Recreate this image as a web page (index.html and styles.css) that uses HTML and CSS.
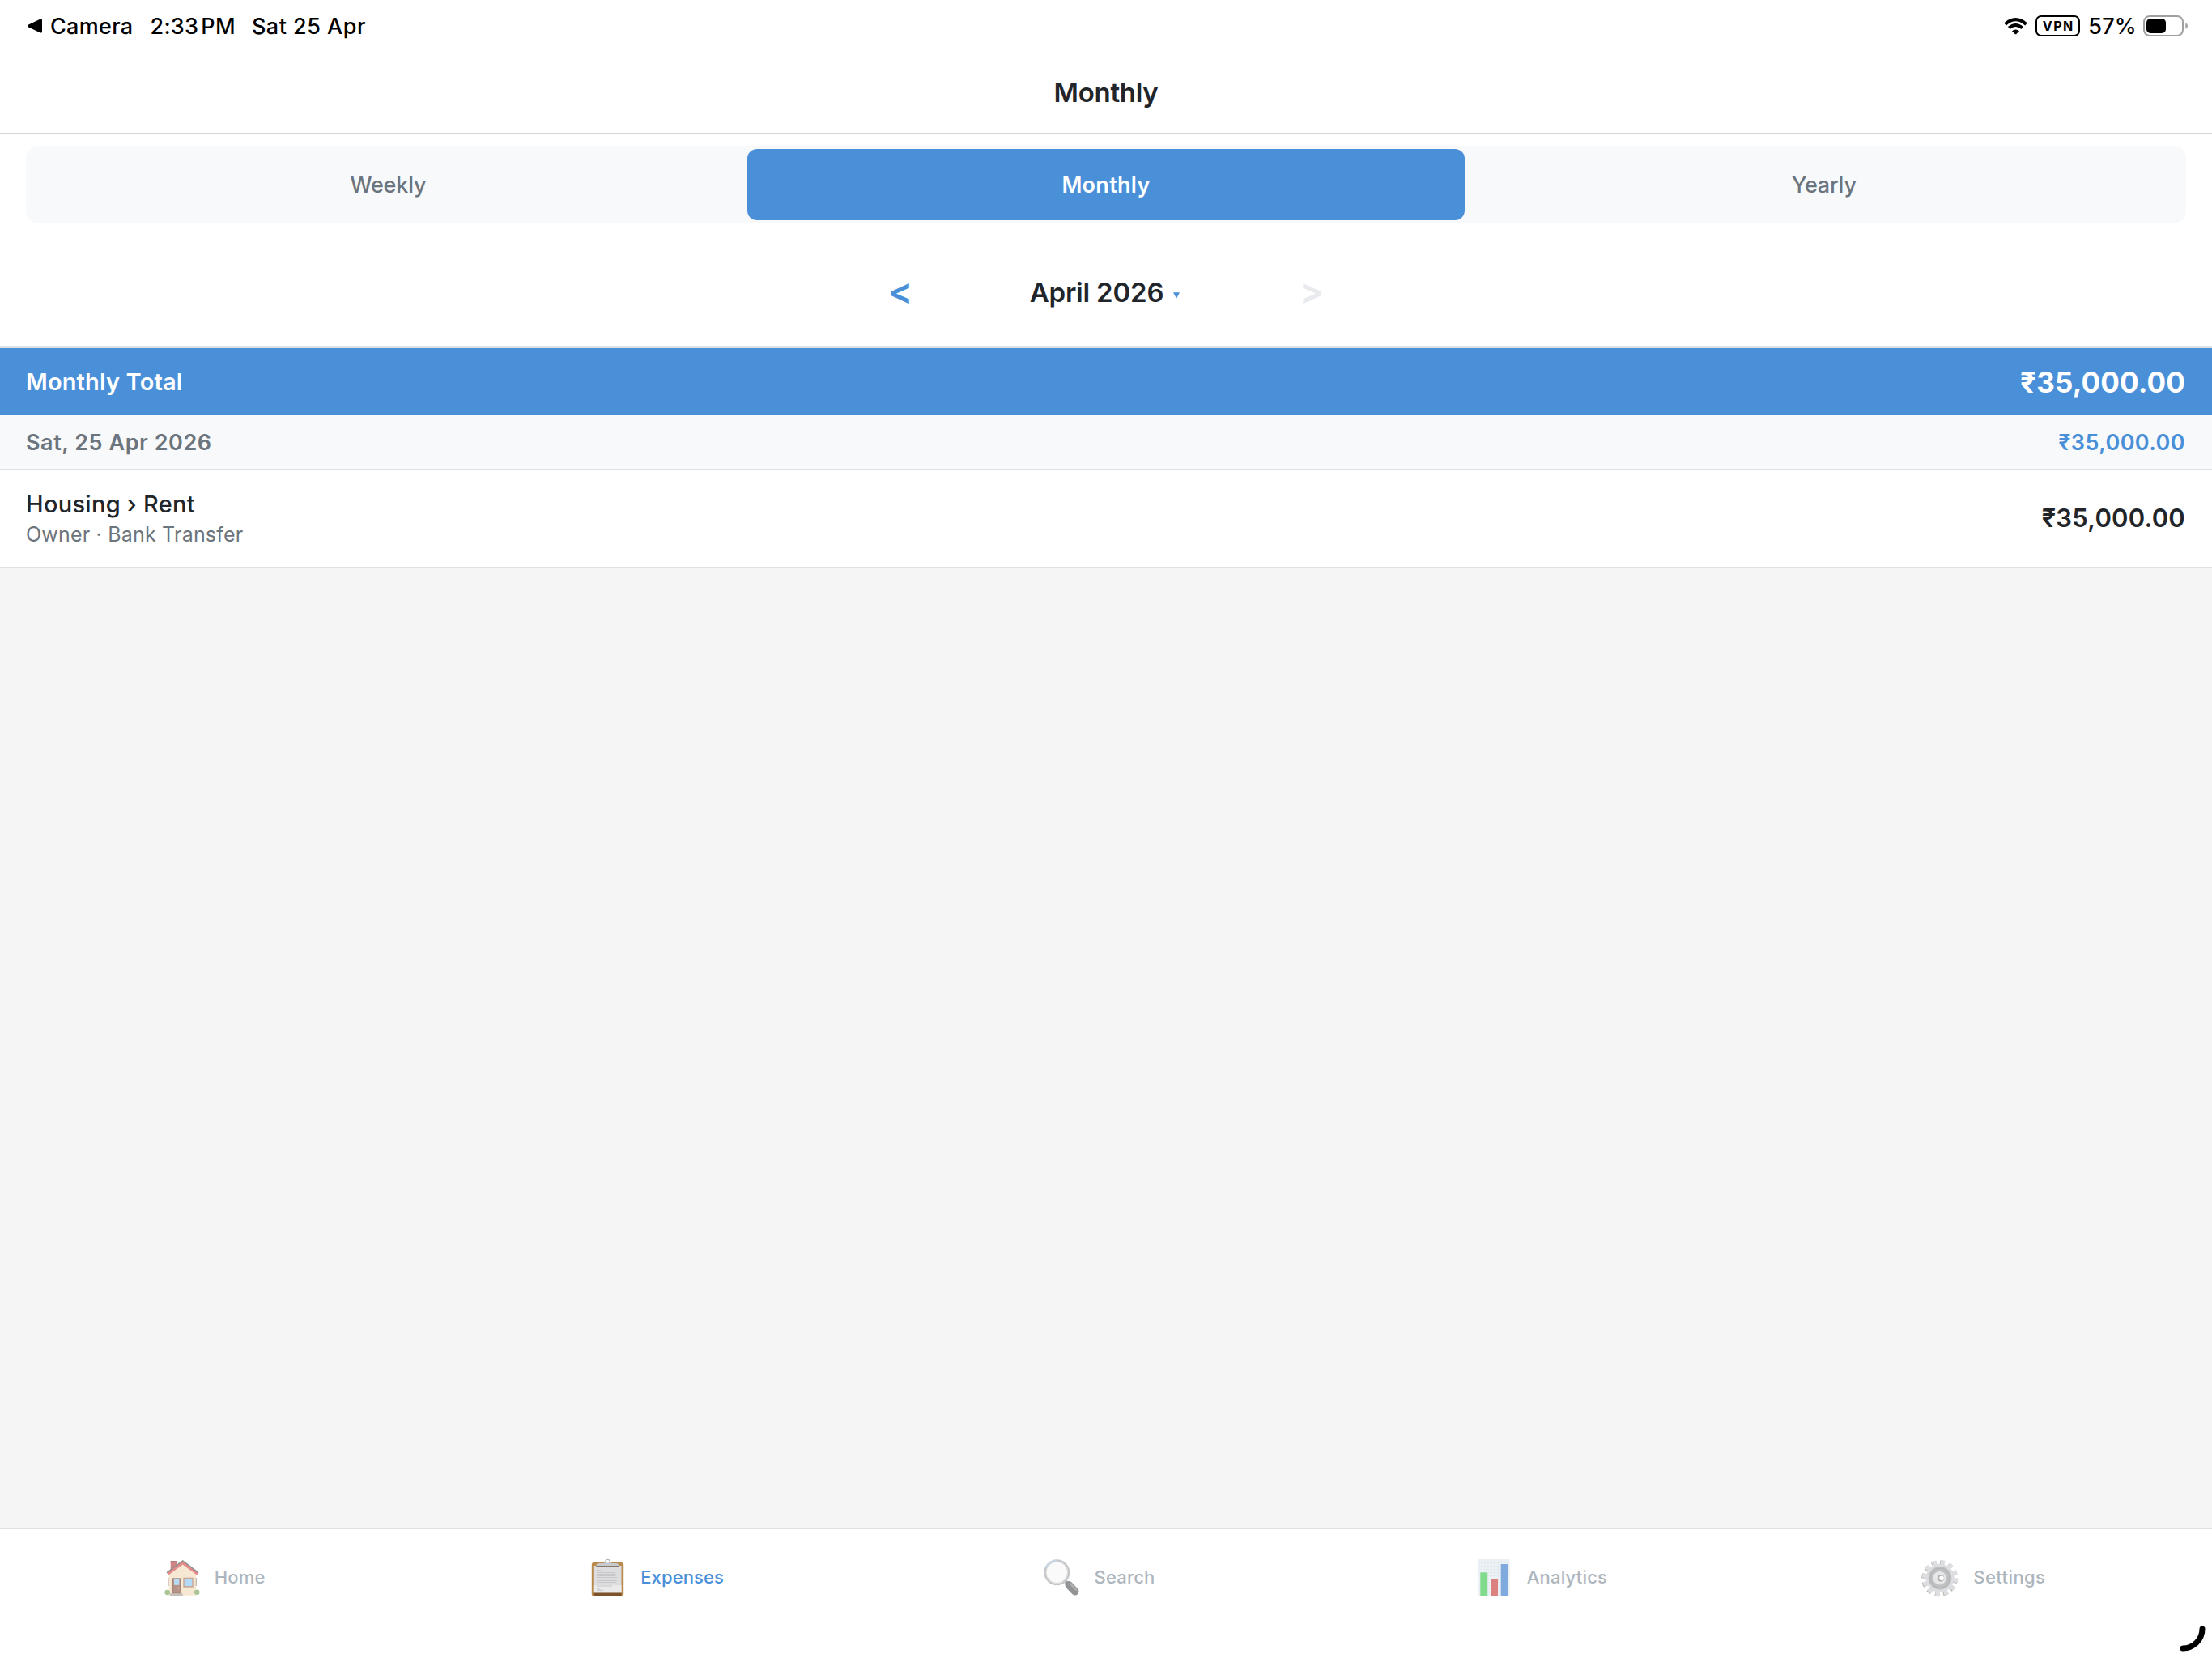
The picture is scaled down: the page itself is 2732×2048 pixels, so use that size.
FILE: index.html
```html
<!DOCTYPE html>
<html lang="en">
<head>
    <meta charset="UTF-8">
    <meta name="viewport" content="width=device-width, initial-scale=1.0">
    <title>Monthly</title>
    <link rel="stylesheet" href="styles.css">
</head>
<body>
    <div class="status-bar">
        <svg width="19" height="18" viewBox="0 0 19 18"><path d="M1.2 7.6 L15.8 0.6 Q18 0 18 2 V16 Q18 18 15.8 17.4 L1.2 10.4 Q-0.6 9 1.2 7.6Z"/></svg>
        <span class="back-app">Camera</span>
        <span class="time">2:33</span>
        <span class="ampm">PM</span>
        <span class="date">Sat 25 Apr</span>
        <div class="status-right">
            <svg width="29" height="21" viewBox="0 0 29 21">
                <g fill="none" stroke="#000" stroke-width="4">
                    <path d="M1.5 8 Q14.5 -3.6 27.5 8"/>
                    <path d="M6.3 12.6 Q14.5 5.4 22.7 12.6"/>
                </g>
                <path d="M10 16.2 Q14.5 12.6 19 16.2 L15.4 19.9 Q14.5 20.7 13.6 19.9Z"/>
            </svg>
            <span class="vpn">VPN</span>
            <span class="percent">57%</span>
            <svg width="55" height="26" viewBox="0 0 55 26">
                <rect x="1" y="1" width="48" height="24" rx="7" fill="none" stroke="#a0a0a0" stroke-width="2"/>
                <rect x="4" y="4" width="24" height="18" rx="5"/>
                <path d="M52.3 9 Q55 10.5 55 13 Q55 15.5 52.3 17Z" fill="#a0a0a0"/>
            </svg>
        </div>
    </div>
    <header>
        <h1>Monthly</h1>
    </header>
    <div class="toolbar">
        <div class="segments">
            <a class="segment">Weekly</a>
            <a class="segment active">Monthly</a>
            <a class="segment">Yearly</a>
        </div>
        <div class="period">
            <span class="arrow">&lt;</span>
            <div class="period-label">
                April 2026
                <svg width="8" height="8" viewBox="0 0 8 8"><path d="M0 0.3H8L4 7.7Z" fill="#4a90d9"/></svg>
            </div>
            <span class="arrow disabled">&gt;</span>
        </div>
    </div>
    <div class="total">
        <span>Monthly Total</span>
        <span class="total-amount">₹35,000.00</span>
    </div>
    <div class="day">
        <span class="day-date">Sat, 25 Apr 2026</span>
        <span class="day-amount">₹35,000.00</span>
    </div>
    <div class="expense">
        <div>
            <div class="category">Housing › Rent</div>
            <div class="details">Owner · Bank Transfer</div>
        </div>
        <span class="amount">₹35,000.00</span>
    </div>
    <nav>
        <a class="tab">
            <svg width="48" height="48" viewBox="0 0 48 48">
                <rect x="9.7" y="3" width="8.3" height="14" fill="#cf8583"/>
                <path d="M9.7 3h8.3v2h-8.3z" fill="#b98080"/>
                <path d="M7.7 18 L24.7 4.5 L41 18 V45.7 H7.7Z" fill="#f6e8d2"/>
                <path d="M7 24v10M41.3 24v10" stroke="#c9bdb0" stroke-width="1.4"/>
                <path d="M6 19 L24.7 5.3 L43.2 19" fill="none" stroke="#e58a88" stroke-width="3.6"/>
                <path d="M5 17.6 L24.7 2.9 L44 17.6" fill="none" stroke="#8d8f90" stroke-width="1.4"/>
                <circle cx="5.7" cy="42" r="3.3" fill="#a9c595"/>
                <circle cx="42.2" cy="41.7" r="3.3" fill="#a9c595"/>
                <rect x="11.7" y="24.3" width="11" height="19.4" fill="#a98378"/>
                <rect x="13.2" y="25.4" width="8" height="17" fill="#b8938a"/>
                <rect x="13.9" y="26" width="6.4" height="6.8" fill="#b5dcf5"/>
                <circle cx="19.4" cy="36.4" r="0.9" fill="#f3d58f"/>
                <rect x="25.3" y="23.7" width="12.4" height="12" fill="#c5a99b"/>
                <rect x="26.8" y="25" width="9.4" height="9" fill="#b3daf6"/>
                <rect x="9" y="43.3" width="15.7" height="2.7" fill="#c4bfb8"/>
            </svg>
            <span>Home</span>
        </a>
        <a class="tab selected">
            <svg width="48" height="48" viewBox="0 0 48 48">
                <rect x="3.8" y="5" width="39.4" height="41.7" rx="3" fill="#b98a4b"/>
                <rect x="6.8" y="41.5" width="33.7" height="4.5" fill="#7d5228"/>
                <rect x="6.8" y="9" width="33.7" height="33.3" fill="#dddddf"/>
                <path d="M6.8 33h33.7v9.3H6.8z" fill="#eaeaeb"/>
                <path d="M10 14.6h5M10 17.5h23M10 19.5h24M10 21.5h23M10 23.5h25M10 25.5h24M10 27.5h25M10 29.5h24M10 31.5h22M10 34h19M10 37.7h4M10 39.3h8" stroke="#c4c4c6" stroke-width="0.9"/>
                <circle cx="23.5" cy="4.3" r="2.9" fill="none" stroke="#b3bac0" stroke-width="1.4"/>
                <path d="M12 6H18.5Q20 4.6 23.5 4.6T28.5 6H35Q37.8 7 37.8 9.3H9.2Q9.2 7 12 6Z" fill="#c6cacd"/>
                <path d="M9.2 9h28.6v1.7H9.2z" fill="#85776b"/>
                <circle cx="23.5" cy="4" r="1.5" fill="#fff"/>
            </svg>
            <span>Expenses</span>
        </a>
        <a class="tab">
            <svg width="48" height="48" viewBox="0 0 48 48">
                <path d="M29 28.5 L32.5 32" stroke="#a5a5a6" stroke-width="4"/>
                <path d="M33.2 32.7 L40.7 40.7" stroke="#929394" stroke-width="9.5" stroke-linecap="round"/>
                <path d="M34.7 31 L42 38.6" stroke="#adaeb0" stroke-width="2.6" stroke-linecap="round"/>
                <circle cx="18.3" cy="17.3" r="14.8" fill="#fafafa" stroke="#c3c7cb" stroke-width="2.4"/>
                <path d="M5 11 A14.8 14.8 0 0 1 18.3 2.2" fill="none" stroke="#c8d9ec" stroke-width="1.6"/>
                <circle cx="18.3" cy="17.3" r="13.3" fill="none" stroke="#d9d7d4" stroke-width="1"/>
            </svg>
            <span>Search</span>
        </a>
        <a class="tab">
            <svg width="48" height="48" viewBox="0 0 48 48">
                <rect x="4" y="1" width="38.6" height="46" fill="#edf2f6"/>
                <path d="M4 5.5h38.6M4 9.5h38.6M4 13.5h38.6M4 17.5h38.6M4 21.5h38.6M4 25.5h38.6M4 29.5h38.6M4 33.5h38.6M4 37.5h38.6M4 41.5h38.6M8 1v46M12 1v46M16 1v46M20 1v46M24 1v46M28 1v46M32 1v46M36 1v46M40 1v46" stroke="#e2e9ef" stroke-width="0.8"/>
                <rect x="6.3" y="17.3" width="8.9" height="29.4" fill="#80dc8c"/>
                <rect x="19" y="25" width="9" height="21.7" fill="#dd8080"/>
                <rect x="31.7" y="7" width="9" height="39.7" fill="#80a9de"/>
            </svg>
            <span>Analytics</span>
        </a>
        <a class="tab settings">
            <svg width="48" height="48" viewBox="0 0 48 48">
                <circle cx="22.4" cy="25" r="19" fill="none" stroke="#b9b4b0" stroke-width="6.4" stroke-dasharray="5.2 4.75"/>
                <circle cx="23.2" cy="24.2" r="19" fill="none" stroke="#dcdee1" stroke-width="6.4" stroke-dasharray="5.2 4.75"/>
                <circle cx="23" cy="24.3" r="17.6" fill="#dcdee1"/>
                <circle cx="23" cy="24.3" r="14.2" fill="#bfc0c2"/>
                <circle cx="23" cy="24.3" r="12.2" fill="none" stroke="#b0b2b4" stroke-width="1"/>
                <circle cx="22.6" cy="24.3" r="8.2" fill="#e6e7e9"/>
                <circle cx="24" cy="24.3" r="4.2" fill="#b0aeac"/>
                <circle cx="25" cy="24.3" r="2.8" fill="#fff"/>
            </svg>
            <span>Settings</span>
        </a>
    </nav>
    <svg class="corner" width="34" height="34" viewBox="0 0 34 34"><path d="M29 5 A24 24 0 0 1 5 29" fill="none" stroke="#000" stroke-width="7" stroke-linecap="round"/></svg>
</body>
</html>
```
FILE: styles.css
```css
* {
    box-sizing: border-box;
}
body {
    font-family: Inter, sans-serif;
    margin: 0;
    height: 2048px;
    display: flex;
    flex-direction: column;
    background-color: #f5f5f5;
    color: #212529;
}
svg {
    display: block;
    flex-shrink: 0;
}
.status-bar {
    display: flex;
    align-items: center;
    height: 64px;
    padding: 0 30px 0 34px;
    background: white;
    color: black;
    font-size: 27px;
    font-weight: 500;
    letter-spacing: 0.3px;
}
.back-app {
    margin-left: 9px;
}
.time {
    margin-left: 21px;
}
.ampm {
    margin-left: 3px;
}
.date {
    margin-left: 20px;
    letter-spacing: 0.5px;
}
.status-right {
    display: flex;
    align-items: center;
    margin-left: auto;
}
.vpn {
    width: 55px;
    height: 26px;
    margin: 0 10px;
    border: 2px solid black;
    border-radius: 7px;
    font-size: 16px;
    font-weight: 700;
    line-height: 22px;
    letter-spacing: 1.4px;
    text-indent: 1px;
    text-align: center;
}
.percent {
    margin-right: 8px;
}
header {
    height: 102px;
    background: white;
    border-bottom: 2px solid #d5d5d6;
    text-align: center;
}
h1 {
    margin: 0;
    font-size: 33px;
    font-weight: 600;
    line-height: 100px;
    letter-spacing: -0.3px;
}
.toolbar {
    height: 264px;
    padding: 14px 32px 0;
    background: white;
    border-bottom: 2px solid #dee2e6;
}
.segments {
    display: flex;
    padding: 4px;
    background: #f8f9fb;
    border-radius: 16px;
}
.segment {
    flex: 1;
    padding-top: 1px;
    border-radius: 12px;
    line-height: 87px;
    font-size: 27px;
    font-weight: 500;
    color: #6c757d;
    text-align: center;
    letter-spacing: -0.2px;
}
.segment.active {
    background: #4a90d9;
    color: white;
    font-weight: 600;
    letter-spacing: 0.3px;
}
.period {
    display: flex;
    align-items: center;
    justify-content: center;
    margin-top: 17px;
    height: 136px;
}
.arrow {
    width: 60px;
    padding-bottom: 4px;
    font-size: 46px;
    font-weight: 600;
    color: #4a90d9;
    text-align: center;
}
.arrow.disabled {
    color: #e9eaed;
}
.period-label {
    display: flex;
    align-items: center;
    justify-content: center;
    width: 448px;
    padding-right: 3px;
    font-size: 33px;
    font-weight: 600;
    letter-spacing: -0.2px;
}
.period-label svg {
    margin: 7px 0 0 12px;
}
.total, .day, .expense {
    display: flex;
    align-items: center;
    justify-content: space-between;
    padding: 0 33px 0 32px;
}
.total {
    height: 83px;
    background: #4a90d9;
    color: white;
    font-size: 29px;
    font-weight: 600;
    letter-spacing: 0.15px;
}
.total-amount {
    font-size: 35px;
    font-weight: 700;
}
.day {
    height: 67px;
    background: #f8f9fb;
    border-bottom: 1px solid #dee2e6;
    font-size: 27px;
    font-weight: 600;
}
.day-date {
    color: #6c757d;
    letter-spacing: 0.55px;
}
.day-amount {
    color: #4a90d9;
    letter-spacing: 0.4px;
}
.expense {
    height: 121px;
    background: white;
    border-bottom: 1px solid #dee2e6;
}
.category {
    font-size: 29px;
    font-weight: 500;
    line-height: 36px;
    letter-spacing: 0.3px;
}
.details {
    margin-top: 4px;
    font-size: 25px;
    line-height: 31px;
    letter-spacing: 0.2px;
    color: #6c757d;
}
.amount {
    padding-bottom: 1px;
    font-size: 31px;
    font-weight: 600;
    letter-spacing: 0.2px;
}
nav {
    display: flex;
    height: 160px;
    margin-top: auto;
    padding-bottom: 40px;
    background: white;
    border-top: 1px solid #dee2e6;
}
.tab {
    flex: 1;
    display: flex;
    align-items: center;
    justify-content: center;
    gap: 16px;
    padding-right: 18px;
    font-size: 22px;
    font-weight: 500;
    letter-spacing: 0.2px;
    color: #adb5bd;
}
.tab span {
    padding-bottom: 2px;
}
.tab.selected {
    color: #4a90d9;
    letter-spacing: 0.1px;
}
.tab.settings {
    letter-spacing: 0.4px;
}
.corner {
    position: absolute;
    right: 7px;
    bottom: 7px;
}
```
